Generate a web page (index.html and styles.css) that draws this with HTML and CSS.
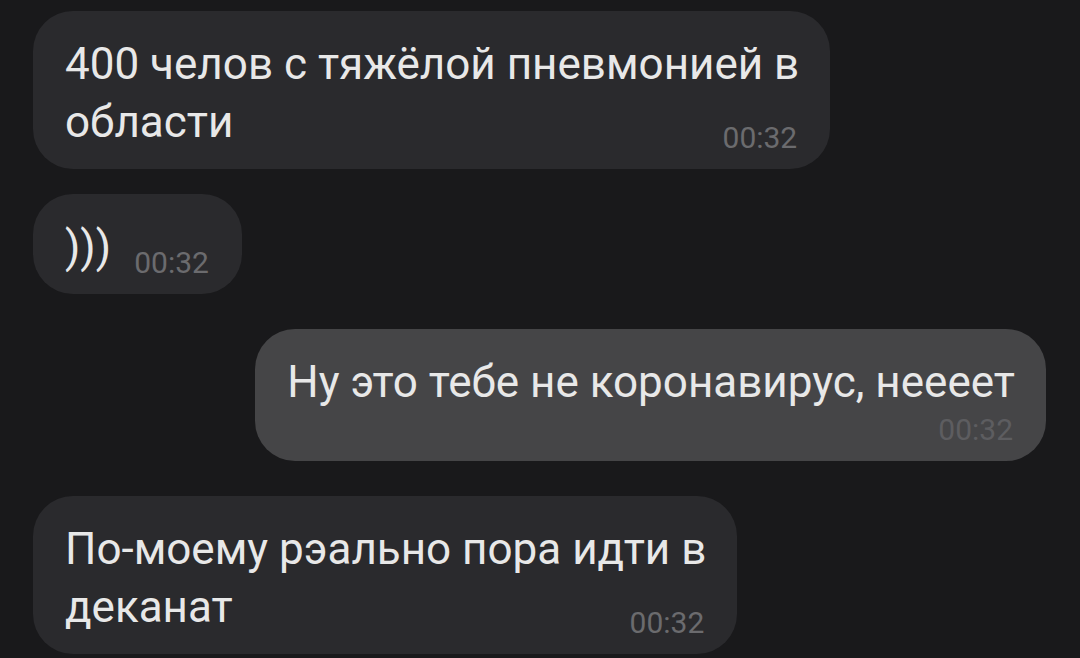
FILE: index.html
```html
<!DOCTYPE html>
<html lang="ru">
<head>
  <meta charset="UTF-8">
  <meta name="viewport" content="width=device-width, initial-scale=1.0">
  <title>Чат</title>
  <link rel="stylesheet" href="styles.css">
</head>
<body>
  <div class="chat">
    <!-- incoming group -->
    <div class="group">
      <div class="bubble">
        <p class="text">400 челов с тяжёлой пневмонией в<br>области</p>
        <span class="time">00:32</span>
      </div>
      <div class="bubble">
        <p class="text">)))<span class="stub"></span></p>
        <span class="time">00:32</span>
      </div>
    </div>

    <!-- outgoing -->
    <div class="group group--out">
      <div class="bubble bubble--out">
        <p class="text">Ну это тебе не коронавирус, неееет<span class="stub stub--row"></span></p>
        <span class="time">00:32</span>
      </div>
    </div>

    <div class="group">
      <div class="bubble">
        <p class="text">По-моему рэально пора идти в<br>деканат</p>
        <span class="time">00:32</span>
      </div>
    </div>
  </div>
</body>
</html>
```

FILE: styles.css
```css
body {
  margin: 0;
  background-color: #19191b;
  font-family: Roboto, "Noto Sans", sans-serif;
  overflow: hidden;
}

.chat {
  display: flex;
  flex-direction: column;
  gap: 35px;
  padding: 11px 34px 0 33px;
}

.group {
  display: flex;
  flex-direction: column;
  align-items: flex-start;
  gap: 25px;
}

.group--out {
  align-items: flex-end;
}

.bubble {
  display: grid;
  background-color: #2a2a2d;
  border-radius: 40px;
  padding: 24px 31px 18px 32px;
}

.bubble--out {
  background-color: #454547;
}

.text,
.time {
  grid-area: 1 / 1;
}

.text {
  margin: 0;
  font-size: 44px;
  line-height: 58px;
  color: #e8e8e8;
}

.stub {
  display: inline-block;
  width: 100px;
  height: 0;
}

.stub--row {
  display: block;
  height: 32px;
}

.time {
  justify-self: end;
  align-self: end;
  margin-right: 2px;
  margin-bottom: -2px;
  font-size: 30px;
  line-height: 30px;
  color: #6b6b6e;
}

.bubble--out .time {
  color: #5d5d60;
}
```
